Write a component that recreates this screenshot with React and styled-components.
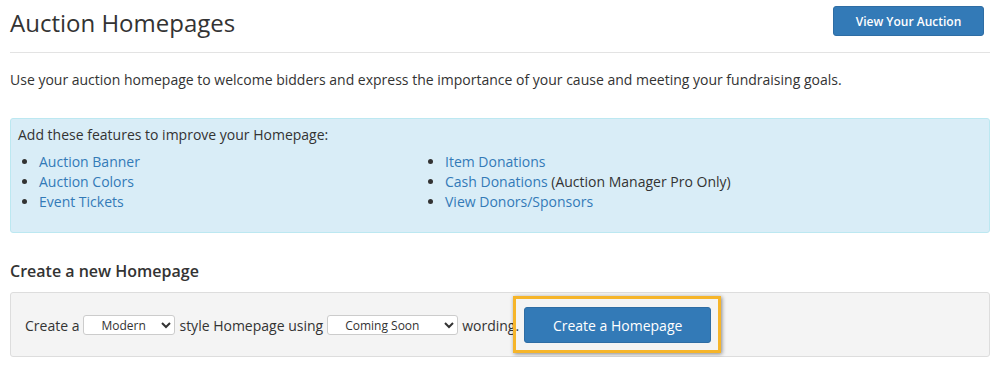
import React from 'react'
import styled, { createGlobalStyle } from 'styled-components'

const GlobalStyle = createGlobalStyle`
  body {
    margin: 0;
    background: #fff;
    font-family: "Open Sans", "Liberation Sans", sans-serif;
    color: #333;
  }
`

const Page = styled.div`
  width: 980px;
  padding: 0 16px 0 10px;
`

const Header = styled.div`
  display: flex;
  justify-content: space-between;
  align-items: flex-start;
  padding: 6px 6px 0 0;
  height: 40px;
  box-sizing: border-box;
`

const Title = styled.h1`
  margin: 0;
  font-size: 24px;
  font-weight: 400;
  line-height: 34px;
  color: #333;
`

const PrimaryButton = styled.button`
  background: #337ab7;
  border: 1px solid #2e6da4;
  border-radius: 3px;
  color: #fff;
  font-family: inherit;
  font-size: ${p => (p.$small ? '12px' : '14px')};
  font-weight: ${p => (p.$small ? 600 : 400)};
  height: ${p => (p.$small ? '30px' : '36px')};
  width: ${p => (p.$small ? '151px' : '187px')};
  padding: 0;
  cursor: pointer;
`

const Rule = styled.hr`
  margin: 12px 0 0;
  border: 0;
  border-top: 1px solid #e3e3e3;
`

const Intro = styled.p`
  margin: 17px 0 0;
  font-size: 14px;
  line-height: 20px;
`

const InfoBox = styled.div`
  margin-top: 28px;
  background: #d9edf7;
  border: 1px solid #bce8f1;
  border-radius: 3px;
  padding: 6px 7px 20px;
  font-size: 14px;
  line-height: 20px;
`

const FeatureGrid = styled.div`
  display: grid;
  grid-template-columns: 406px 1fr;
  margin-top: 7px;
`

const FeatureList = styled.ul`
  margin: 0;
  padding-left: 21px;
  list-style: disc;
`

const Link = styled.a`
  color: #337ab7;
  text-decoration: none;
`

const SectionTitle = styled.h3`
  margin: 27px 0 0;
  font-size: 16px;
  font-weight: 600;
  line-height: 22px;
`

const CreateBox = styled.div`
  margin-top: 10px;
  background: #f4f4f4;
  border: 1px solid #ddd;
  border-radius: 3px;
  padding: 14px 14px 13px;
  display: flex;
  align-items: center;
  gap: 4px;
  font-size: 14px;
`

const Select = styled.select`
  width: ${p => p.$w}px;
  height: 20px;
  font-family: inherit;
  font-size: 12px;
  color: #333;
  background: #fff;
  border: 1px solid #ccc;
  border-radius: 3px;
  padding: 0 0 0 13px;
`

const Highlight = styled.div`
  position: relative;
  margin-left: 1px;
  &::before {
    content: '';
    position: absolute;
    left: -11px;
    top: -11px;
    right: -10px;
    bottom: -10px;
    border: 3px solid #f6b52a;
    box-shadow: 1px 1px 4px rgba(0, 0, 0, 0.45);
    pointer-events: none;
  }
`

const App = () => {
  return (
    <Page>
      <GlobalStyle />
      <Header>
        <Title>Auction Homepages</Title>
        <PrimaryButton $small>View Your Auction</PrimaryButton>
      </Header>
      <Rule />
      <Intro>
        Use your auction homepage to welcome bidders and express the importance of your cause and meeting your fundraising goals.
      </Intro>
      <InfoBox>
        <div>Add these features to improve your Homepage:</div>
        <FeatureGrid>
          <FeatureList>
            <li><Link href="#">Auction Banner</Link></li>
            <li><Link href="#">Auction Colors</Link></li>
            <li><Link href="#">Event Tickets</Link></li>
          </FeatureList>
          <FeatureList>
            <li><Link href="#">Item Donations</Link></li>
            <li><Link href="#">Cash Donations</Link> (Auction Manager Pro Only)</li>
            <li><Link href="#">View Donors/Sponsors</Link></li>
          </FeatureList>
        </FeatureGrid>
      </InfoBox>
      <SectionTitle>Create a new Homepage</SectionTitle>
      <CreateBox>
        <span>Create a</span>
        <Select $w={92} defaultValue="modern">
          <option value="modern">Modern</option>
          <option value="classic">Classic</option>
        </Select>
        <span>style Homepage using</span>
        <Select $w={131} defaultValue="soon">
          <option value="soon">Coming Soon</option>
          <option value="live">Live</option>
        </Select>
        <span>wording.</span>
        <Highlight>
          <PrimaryButton>Create a Homepage</PrimaryButton>
        </Highlight>
      </CreateBox>
    </Page>
  )
}

export default App
